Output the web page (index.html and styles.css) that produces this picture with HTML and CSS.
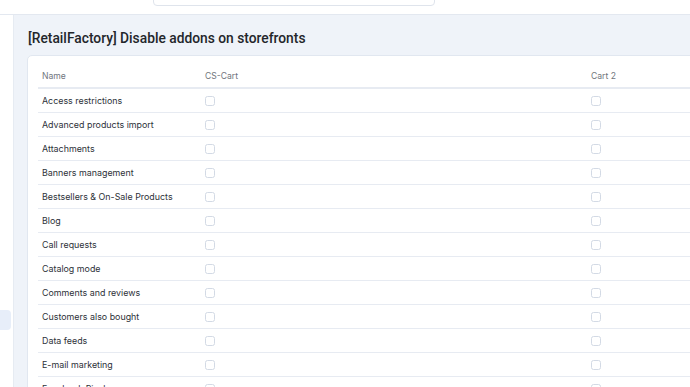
FILE: index.html
```html
<!DOCTYPE html>
<html lang="en">
<head>
  <meta charset="UTF-8">
  <title>Disable addons on storefronts</title>
  <link rel="stylesheet" href="styles.css">
</head>
<body>

  <!-- Top bar with search -->
  <header class="topbar">
    <div class="search"></div>
  </header>

  <div class="layout">
    <!-- Sidebar -->
    <aside class="sidebar">
      <div class="side-item"></div>
    </aside>

    <!-- Main content -->
    <main class="main">
      <h1 class="title">[RetailFactory] Disable addons on storefronts</h1>

      <div class="card">
        <div class="table">
          <div class="row head">
            <div class="cell">Name</div>
            <div class="cell">CS-Cart</div>
            <div class="cell">Cart 2</div>
          </div>
          <div class="row"><div class="cell">Access restrictions</div><div class="cell"><span class="check"></span></div><div class="cell"><span class="check"></span></div></div>
          <div class="row"><div class="cell">Advanced products import</div><div class="cell"><span class="check"></span></div><div class="cell"><span class="check"></span></div></div>
          <div class="row"><div class="cell">Attachments</div><div class="cell"><span class="check"></span></div><div class="cell"><span class="check"></span></div></div>
          <div class="row"><div class="cell">Banners management</div><div class="cell"><span class="check"></span></div><div class="cell"><span class="check"></span></div></div>
          <div class="row"><div class="cell">Bestsellers &amp; On-Sale Products</div><div class="cell"><span class="check"></span></div><div class="cell"><span class="check"></span></div></div>
          <div class="row"><div class="cell">Blog</div><div class="cell"><span class="check"></span></div><div class="cell"><span class="check"></span></div></div>
          <div class="row"><div class="cell">Call requests</div><div class="cell"><span class="check"></span></div><div class="cell"><span class="check"></span></div></div>
          <div class="row"><div class="cell">Catalog mode</div><div class="cell"><span class="check"></span></div><div class="cell"><span class="check"></span></div></div>
          <div class="row"><div class="cell">Comments and reviews</div><div class="cell"><span class="check"></span></div><div class="cell"><span class="check"></span></div></div>
          <div class="row"><div class="cell">Customers also bought</div><div class="cell"><span class="check"></span></div><div class="cell"><span class="check"></span></div></div>
          <div class="row"><div class="cell">Data feeds</div><div class="cell"><span class="check"></span></div><div class="cell"><span class="check"></span></div></div>
          <div class="row"><div class="cell">E-mail marketing</div><div class="cell"><span class="check"></span></div><div class="cell"><span class="check"></span></div></div>
          <div class="row"><div class="cell">Facebook Pixel</div><div class="cell"><span class="check"></span></div><div class="cell"><span class="check"></span></div></div>
        </div>
      </div>
    </main>
  </div>

</body>
</html>
```

FILE: styles.css
```css
/* Reset */
* {
  margin: 0;
  padding: 0;
  box-sizing: border-box;
}

body {
  font-family: Inter, 'Noto Sans', sans-serif;
  background: #ffffff;
  color: #2b2f36;
  height: 100vh;
  overflow: hidden;
}

/* Top bar (page is scrolled, search box is cut off at the top) */
.topbar {
  display: flow-root;
  height: 15px;
  background: #ffffff;
  border-bottom: 1px solid #e3e8f0;
}

.search {
  margin-left: 153px;
  margin-top: -16px;
  width: 282px;
  height: 22px;
  border: 1px solid #dfe4ec;
  border-radius: 4px;
  background: #fff;
}

/* Layout */
.layout {
  display: flex;
  height: calc(100vh - 15px);
}

.sidebar {
  width: 14px;
  flex-shrink: 0;
  background: #ffffff;
  border-right: 1px solid #e6ebf2;
  padding-top: 295px;
}

.side-item {
  width: 11px;
  height: 20px;
  background: #e7eef9;
  border-radius: 0 4px 4px 0;
}

.main {
  flex: 1;
  background: #eff3f9;
  padding: 14px 0 0 13px;
  overflow: hidden;
}

.title {
  font-family: Roboto, sans-serif;
  font-size: 13.8px;
  font-weight: 500;
  color: #23262b;
  line-height: 18px;
  padding-left: 1px;
  margin-bottom: 8px;
}

/* Card with table */
.card {
  width: 700px;
  background: #ffffff;
  border: 1px solid #e1e7f0;
  border-radius: 5px;
  padding: 9px 0 0 10px;
  height: 400px;
}

.row {
  display: grid;
  grid-template-columns: 163px 386px 1fr;
  height: 24px;
  border-bottom: 1px solid #e7ebf2;
  align-items: center;
}

.cell {
  padding-left: 4px;
  font-size: 8.9px;
  color: #2d3138;
  white-space: nowrap;
  display: flex;
  align-items: center;
}

.row.head {
  border-bottom: 2px solid #e7ebf2;
}

.row.head .cell {
  font-size: 8.6px;
  color: #70757d;
}

.check {
  width: 10px;
  height: 10px;
  border: 1px solid #d3dae5;
  border-radius: 2.5px;
  background: #fff;
}
```
